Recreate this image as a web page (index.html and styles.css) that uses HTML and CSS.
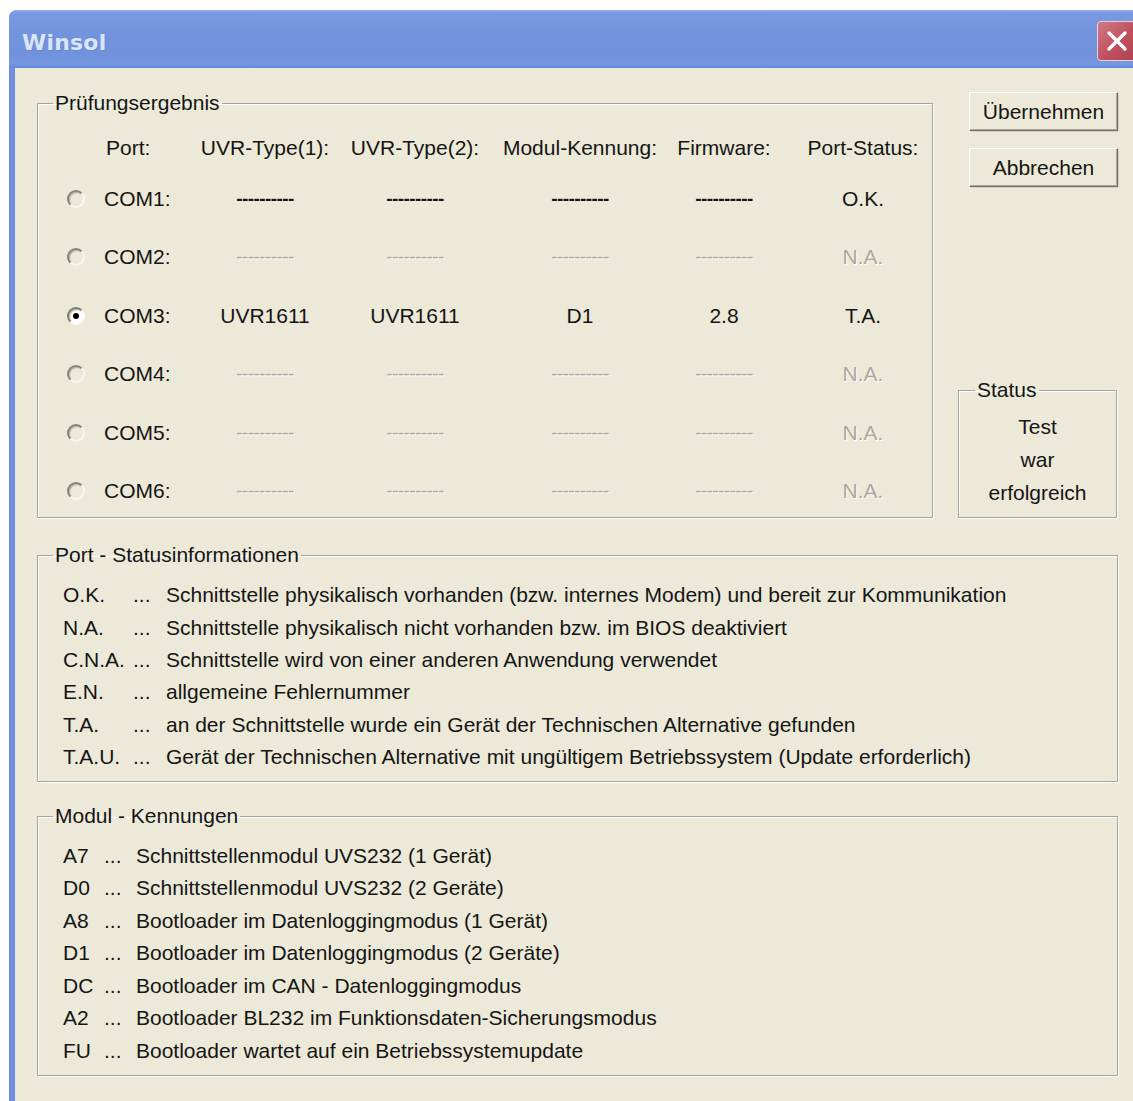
FILE: index.html
```html
<!DOCTYPE html>
<html lang="de">
<head>
<meta charset="utf-8">
<title>Winsol</title>
<link rel="stylesheet" href="styles.css">
</head>
<body>
<div class="window">
  <div class="titlebar">
    <span class="title">Winsol</span>
    <button class="close" aria-label="Schließen">
      <svg width="24" height="24" viewBox="0 0 24 24"><path d="M4 4 L20 20 M20 4 L4 20" stroke="#fff" stroke-width="3.4" stroke-linecap="round"/></svg>
    </button>
  </div>
  <div class="client">
    <div class="top">
      <fieldset class="group test">
        <legend>Prüfungsergebnis</legend>
        <div class="ports">
          <div class="cell"></div>
          <div class="cell port hdr">Port:</div>
          <div class="cell">UVR-Type(1):</div>
          <div class="cell">UVR-Type(2):</div>
          <div class="cell">Modul-Kennung:</div>
          <div class="cell">Firmware:</div>
          <div class="cell stat">Port-Status:</div>

          <div class="cell"><span class="radio"></span></div>
          <div class="cell port">COM1:</div>
          <div class="cell dash">----------</div>
          <div class="cell dash">----------</div>
          <div class="cell dash">----------</div>
          <div class="cell dash">----------</div>
          <div class="cell stat">O.K.</div>

          <div class="cell"><span class="radio"></span></div>
          <div class="cell port">COM2:</div>
          <div class="cell dash off">----------</div>
          <div class="cell dash off">----------</div>
          <div class="cell dash off">----------</div>
          <div class="cell dash off">----------</div>
          <div class="cell stat off">N.A.</div>

          <div class="cell"><span class="radio on"></span></div>
          <div class="cell port">COM3:</div>
          <div class="cell">UVR1611</div>
          <div class="cell">UVR1611</div>
          <div class="cell">D1</div>
          <div class="cell">2.8</div>
          <div class="cell stat">T.A.</div>

          <div class="cell"><span class="radio"></span></div>
          <div class="cell port">COM4:</div>
          <div class="cell dash off">----------</div>
          <div class="cell dash off">----------</div>
          <div class="cell dash off">----------</div>
          <div class="cell dash off">----------</div>
          <div class="cell stat off">N.A.</div>

          <div class="cell"><span class="radio"></span></div>
          <div class="cell port">COM5:</div>
          <div class="cell dash off">----------</div>
          <div class="cell dash off">----------</div>
          <div class="cell dash off">----------</div>
          <div class="cell dash off">----------</div>
          <div class="cell stat off">N.A.</div>

          <div class="cell"><span class="radio"></span></div>
          <div class="cell port">COM6:</div>
          <div class="cell dash off">----------</div>
          <div class="cell dash off">----------</div>
          <div class="cell dash off">----------</div>
          <div class="cell dash off">----------</div>
          <div class="cell stat off">N.A.</div>
        </div>
      </fieldset>
      <div class="side">
        <button class="btn btn-first">Übernehmen</button>
        <button class="btn">Abbrechen</button>
        <fieldset class="group status">
          <legend>Status</legend>
          <div class="status-text">Test<br>war<br>erfolgreich</div>
        </fieldset>
      </div>
    </div>

    <fieldset class="group info">
      <legend>Port - Statusinformationen</legend>
      <div class="list list-ports">
        <span>O.K.</span><span>...</span><span>Schnittstelle physikalisch vorhanden (bzw. internes Modem) und bereit zur Kommunikation</span>
        <span>N.A.</span><span>...</span><span>Schnittstelle physikalisch nicht vorhanden bzw. im BIOS deaktiviert</span>
        <span>C.N.A.</span><span>...</span><span>Schnittstelle wird von einer anderen Anwendung verwendet</span>
        <span>E.N.</span><span>...</span><span>allgemeine Fehlernummer</span>
        <span>T.A.</span><span>...</span><span>an der Schnittstelle wurde ein Gerät der Technischen Alternative gefunden</span>
        <span>T.A.U.</span><span>...</span><span>Gerät der Technischen Alternative mit ungültigem Betriebssystem (Update erforderlich)</span>
      </div>
    </fieldset>

    <fieldset class="group info modules">
      <legend>Modul - Kennungen</legend>
      <div class="list list-mods">
        <span>A7</span><span>...</span><span>Schnittstellenmodul UVS232 (1 Gerät)</span>
        <span>D0</span><span>...</span><span>Schnittstellenmodul UVS232 (2 Geräte)</span>
        <span>A8</span><span>...</span><span>Bootloader im Datenloggingmodus (1 Gerät)</span>
        <span>D1</span><span>...</span><span>Bootloader im Datenloggingmodus (2 Geräte)</span>
        <span>DC</span><span>...</span><span>Bootloader im CAN - Datenloggingmodus</span>
        <span>A2</span><span>...</span><span>Bootloader BL232 im Funktionsdaten-Sicherungsmodus</span>
        <span>FU</span><span>...</span><span>Bootloader wartet auf ein Betriebssystemupdate</span>
      </div>
    </fieldset>
  </div>
</div>
</body>
</html>
```

FILE: styles.css
```css
html, body {
  margin: 0;
  padding: 0;
  background: #fff;
  overflow: hidden;
  height: 100%;
}

body {
  font-family: "Liberation Sans", Arial, sans-serif;
  font-size: 21px;
  color: #151515;
  padding-top: 10px;
  box-sizing: border-box;
}

.window {
  margin-left: 9px;
  width: 1134px;
  height: 1091px;
  background: #6f8fdc;
  border-top-left-radius: 8px;
  display: flex;
  flex-direction: column;
  overflow: hidden;
}

/* caption bar */
.titlebar {
  height: 58px;
  flex: none;
  display: flex;
  align-items: center;
  justify-content: space-between;
  padding-left: 13px;
  background: linear-gradient(#93ace8 0, #7c9ae1 5%, #7293dd 40%, #7092dc 75%, #7598e1 92%, #6888d8 100%);
}

.title {
  font-family: "DejaVu Sans", Verdana, sans-serif;
  font-weight: bold;
  font-size: 22px;
  color: #dbe5f8;
  letter-spacing: 0.2px;
  text-shadow: 1px 1px 0 #6a86cc;
  margin-top: 6px;
}

.close {
  width: 40px;
  height: 40px;
  margin-right: 6px;
  margin-top: 4px;
  padding: 0;
  border: 1px solid #e8d0d6;
  border-radius: 4px;
  background: linear-gradient(135deg, #d07a84 0%, #c0505f 55%, #b04252 100%);
  display: flex;
  align-items: center;
  justify-content: center;
}

/* dialog area */
.client {
  flex: 1;
  margin-left: 6px;
  background: #ece9d8;
  padding: 23px 14px 0 22px;
}

.top {
  display: flex;
  gap: 25px;
}

/* etched group boxes */
.group {
  margin: 0;
  padding: 0;
  border: 1px solid #a6a498;
  box-shadow: 1px 1px 0 #fff, inset 1px 1px 0 #fff;
  min-width: 0;
}

.group legend {
  margin-left: 15px;
  padding: 0 2px;
  line-height: 24px;
}

.test {
  width: 896px;
  box-sizing: border-box;
}

.ports {
  display: grid;
  grid-template-columns: 54px 98px 150px 150px 180px 108px 1fr;
  grid-template-rows: 25px repeat(6, 40px);
  row-gap: 18.5px;
  padding: 20px 0 6px;
  align-items: center;
  text-align: center;
}

.cell {
  white-space: nowrap;
}

.port {
  text-align: left;
  padding-left: 12px;
}

.port.hdr {
  padding-left: 14px;
}

.stat {
  padding-left: 16px;
}

.dash {
  letter-spacing: -0.6px;
  font-size: 19px;
  font-weight: bold;
}

.off {
  color: #aaa89c;
  text-shadow: 1px 1px 0 #fff;
  font-weight: normal;
}

/* classic sunken option button */
.radio {
  display: block;
  width: 14px;
  height: 14px;
  margin-left: 29px;
  border-radius: 50%;
  border: 2px solid;
  border-color: #85837a #f7f6f0 #f7f6f0 #85837a;
  box-shadow: inset 1px 1px 1px #b3b1a6;
  position: relative;
}

.radio.on {
  background: #fff;
  border-color: #7d7b72 #fbfbf8 #fbfbf8 #7d7b72;
}

.radio.on::after {
  content: "";
  position: absolute;
  left: 4px;
  top: 4px;
  width: 6px;
  height: 6px;
  border-radius: 50%;
  background: #000;
}

/* buttons and status box */
.side {
  width: 160px;
  display: flex;
  flex-direction: column;
  align-items: flex-end;
}

.btn {
  width: 149px;
  height: 39px;
  font: inherit;
  color: #151515;
  background: #ece9d8;
  border: 1px solid;
  border-color: #fff #716f64 #716f64 #fff;
  box-shadow: inset -1px -1px 0 #aca899, 1px 1px 0 #d6d3c2;
  padding: 0;
}

.btn-first {
  margin-top: 1px;
  margin-bottom: 17px;
}

.status {
  margin-top: auto;
  width: 159px;
  box-sizing: border-box;
  align-self: flex-start;
}

.status legend {
  margin-left: 16px;
}

.status-text {
  text-align: center;
  line-height: 33px;
  padding: 8px 0 8px;
}

/* legend lists */
.info {
  margin-top: 25px;
  width: 1081px;
  box-sizing: border-box;
}

.modules {
  margin-top: 22px;
}

.list {
  display: grid;
  grid-auto-rows: 32.4px;
  align-items: center;
  padding: 12px 0 8px 25px;
  white-space: nowrap;
}

.list-ports {
  grid-template-columns: 70px 33px 1fr;
}

.list-mods {
  grid-template-columns: 41px 32px 1fr;
  grid-auto-rows: 32.5px;
  padding-top: 11px;
}
```
